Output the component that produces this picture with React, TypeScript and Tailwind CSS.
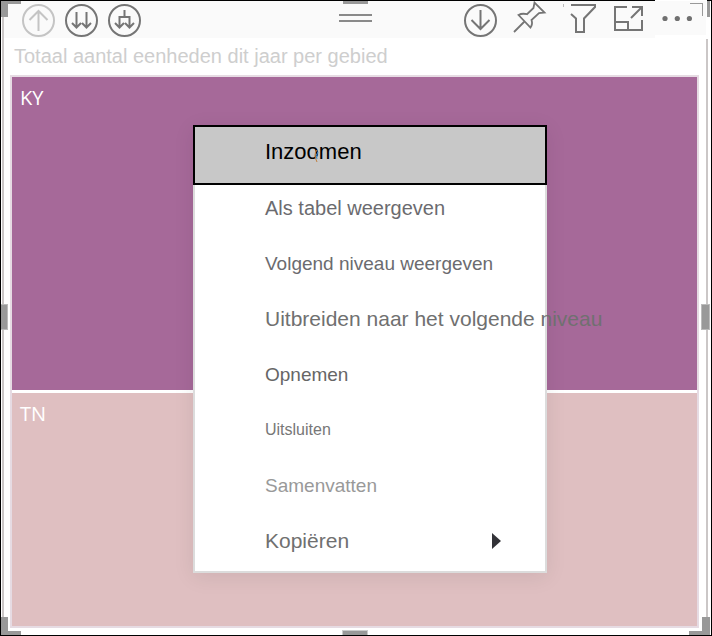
import type { ReactNode } from "react";

function IconButton({ label, children }: { label: string; children: ReactNode }) {
  return (
    <button type="button" aria-label={label} className="block shrink-0">
      {children}
    </button>
  );
}

function CircleIcon({ muted, d }: { muted?: boolean; d: string }) {
  return (
    <svg
      width="33"
      height="33"
      viewBox="0 0 33 33"
      fill="none"
      strokeWidth="2"
      className={muted ? "stroke-[#c4c4c4]" : "stroke-[#757575]"}
    >
      <circle cx="16.5" cy="16.5" r="15.5" />
      <path d={d} />
    </svg>
  );
}

const items = [
  { label: "Als tabel weergeven", style: "text-[20px] text-[#6b6b6f]" },
  { label: "Volgend niveau weergeven", style: "text-[19px] text-[#6b6b6f]" },
  { label: "Uitbreiden naar het volgende niveau", style: "text-[21px] text-[#707070]" },
  { label: "Opnemen", style: "text-[19px] text-[#666666]" },
  { label: "Uitsluiten", style: "text-[16px] text-[#777777]" },
  { label: "Samenvatten", style: "text-[19px] text-[#999999]" },
  { label: "Kopiëren", style: "text-[21px] text-[#707070]", submenu: true },
];

function Toolbar() {
  return (
    <header className="grid h-[37px] grid-cols-[1fr_auto_1fr] items-start bg-[#fafafa] pt-[3px]">
      <div className="flex gap-[10px] pl-[18px]">
        <IconButton label="Omhoog">
          <CircleIcon muted d="M16.5 27V7M7.5 16l9-9 9 9" />
        </IconButton>
        <IconButton label="Volgend niveau">
          <CircleIcon d="M11.5 8v16M7 19l4.5 4.5L16 19M21.5 8v16M17 19l4.5 4.5L26 19" />
        </IconButton>
        <IconButton label="Uitbreiden">
          <CircleIcon d="M16.5 6v7M11.5 24V13h10v11M7 19l4.5 4.5L16 19M17 19l4.5 4.5L26 19" />
        </IconButton>
      </div>
      <div className="mt-[10px] h-2 w-[33px] border-y-2 border-[#8a8a8a]" />
      <div className="flex justify-end gap-[17px] pr-[14px]">
        <IconButton label="Inzoommodus">
          <CircleIcon d="M16.5 6v19M7.5 16l9 9 9-9" />
        </IconButton>
        <IconButton label="Vastmaken">
          <svg
            width="32"
            height="33"
            viewBox="0 0 32 33"
            fill="none"
            stroke="#757575"
            strokeWidth="1.8"
            className="overflow-visible"
          >
            <path d="M0 28 10 18M4.5 11 16.5 23.5Q19 20 17.5 16L25 9 30.500 8.500 20.500-1.500 19.500 4 13 10.200Q8 9 4.500 11z" />
          </svg>
        </IconButton>
        <IconButton label="Filteren">
          <svg width="33" height="33" viewBox="0 0 33 33" fill="none" stroke="#757575" strokeWidth="2">
            <path d="M8 1h24v2L21 14.5V28h-8V14.5L8 10" />
            <path d="M.5 0v3" stroke="#bbbbbb" strokeWidth="1" />
          </svg>
        </IconButton>
        <IconButton label="Focusmodus">
          <svg width="30" height="33" viewBox="0 0 30 33" fill="none" stroke="#757575" strokeWidth="2">
            <path d="M14 3H2v23h27V16M2 18h13v8M19 3h10v9M29 3 18 14" />
          </svg>
        </IconButton>
        <IconButton label="Meer opties">
          <svg width="32" height="33" viewBox="0 0 32 33" fill="#707070">
            <circle cx="5" cy="14.5" r="2.6" />
            <circle cx="17.3" cy="14.5" r="2.6" />
            <circle cx="29.4" cy="14.5" r="2.6" />
          </svg>
        </IconButton>
      </div>
    </header>
  );
}

function ContextMenu() {
  return (
    <div
      role="menu"
      className="absolute top-[124px] bottom-[62px] left-[192px] flex w-[354px] flex-col bg-white shadow-[0_4px_20px_rgba(0,0,0,0.08)]"
    >
      <button
        type="button"
        role="menuitem"
        className="relative h-[60px] shrink-0 border-2 border-black bg-[#c8c8c8] pb-[8px] pl-[70px] text-left text-[22px] text-black"
      >
        Inzoomen
        <svg className="absolute top-[22px] left-[117px]" width="8" height="14" viewBox="0 0 8 14" fill="none">
          <path d="M5 1Q1 5 5 13" stroke="#c08040" />
          <path d="M6 3Q3 6 5 10" stroke="#4090d0" />
        </svg>
      </button>
      <div className="flex flex-1 flex-col justify-between border-2 border-t-0 border-[#dcdcdc] pt-[9px] pb-[16px]">
        {items.map((item) => (
          <button
            key={item.label}
            type="button"
            role="menuitem"
            className={`flex h-[28px] items-center justify-between pr-[44px] pl-[70px] text-left leading-[28px] whitespace-nowrap ${item.style}`}
          >
            {item.label}
            {item.submenu && (
              <svg width="9" height="16" viewBox="0 0 9 16" className="fill-[#333338]">
                <path d="M0 0l9 8-9 8z" />
              </svg>
            )}
          </button>
        ))}
      </div>
    </div>
  );
}

function Handles() {
  return (
    <div aria-hidden="true">
      <i className="absolute -top-px right-1 h-px w-[52px] bg-white" />
      <i className="absolute top-0 right-[3px] h-[38px] w-[2px] bg-white" />
      <i className="absolute top-[34px] right-1 h-[3px] w-[52px] bg-white" />
      <i className="absolute top-0 left-0 h-4 w-5 border-t-[3px] border-l-[7px] border-[#999999]" />
      <i className="absolute top-0 left-1/2 -ml-[13px] h-[3px] w-[25px] bg-[#999999]" />
      <i className="absolute top-[2px] right-[8px] h-[13px] w-[13px] border-t border-r border-[#999999]" />
      <i className="absolute top-0 right-px h-4 w-[3px] bg-[#999999]" />
      <i className="absolute top-1/2 left-0 -mt-[14px] h-[26px] w-[7px] border border-l-0 border-[#bbbbbb] bg-[#999999]" />
      <i className="absolute top-1/2 right-px -mt-[14px] h-[26px] w-[9px] border border-[#bbbbbb] bg-[#999999]" />
      <i className="absolute bottom-0 left-0 h-[18px] w-5 border-b-[4px] border-l-[7px] border-[#999999]" />
      <i className="absolute bottom-0 left-1/2 -ml-[14px] h-[5px] w-[26px] border border-b-0 border-[#cccccc] bg-[#999999]" />
      <i className="absolute right-px bottom-0 h-[18px] w-[21px] border-r-[8px] border-b-[4px] border-[#999999]" />
    </div>
  );
}

export default function App() {
  return (
    <main className="relative flex min-h-screen flex-col border border-black bg-white pr-[3px] pl-px font-['Liberation_Sans',Arial,sans-serif]">
      <div className="flex flex-1 flex-col border-x-2 border-[#cbc7c7]">
        <Toolbar />
        <h1 className="pt-[5px] pl-[10px] text-[20px] leading-[26px] text-[#cecece]">
          Totaal aantal eenheden dit jaar per gebied
        </h1>
        <section className="mt-[6px] mr-[7px] mb-[7px] ml-[6px] flex flex-1 flex-col border-2 border-[#e6dbe3] font-['Open_Sans',sans-serif] text-[20px] leading-[28px] text-white">
          <div className="flex-[313_1_0px] bg-[#a66999]">
            <h2 className="pt-[7px] pl-[8px]">KY</h2>
          </div>
          <div className="h-[3px] bg-white" />
          <div className="flex-[233_1_0px] bg-[#dfbfc1]">
            <h2 className="pt-[7px] pl-[8px]">TN</h2>
          </div>
        </section>
      </div>
      <Handles />
      <ContextMenu />
    </main>
  );
}
